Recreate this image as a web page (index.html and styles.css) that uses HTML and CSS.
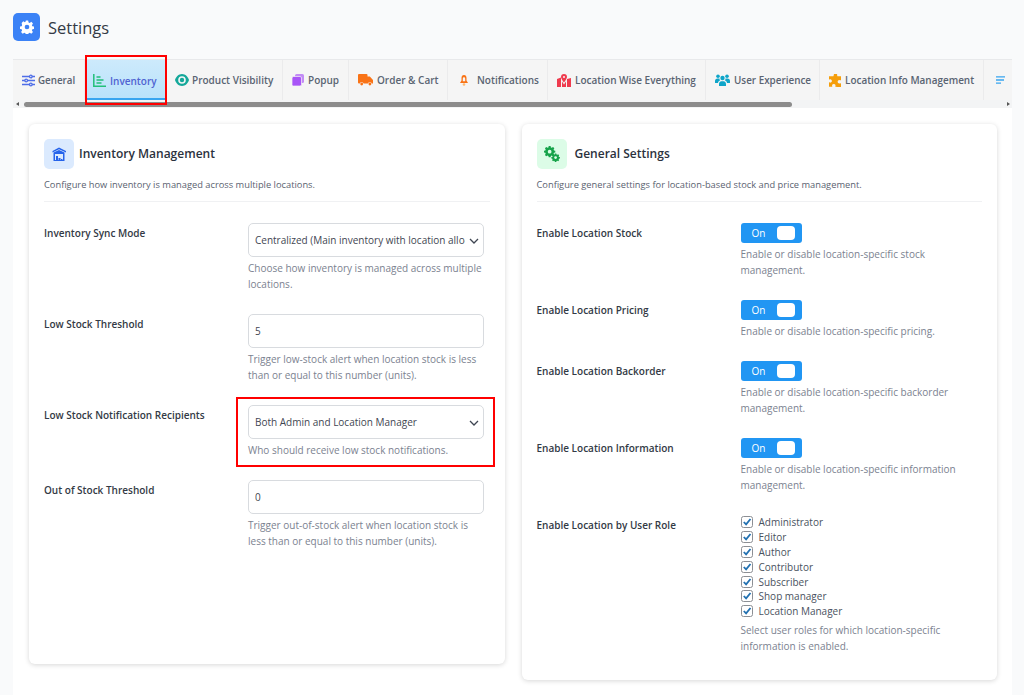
FILE: index.html
```html
<!DOCTYPE html>
<html lang="en">
<head>
<meta charset="utf-8">
<title>Settings</title>
<link rel="stylesheet" href="styles.css">
</head>
<body>
<div class="page">
  <header class="page-head">
    <span class="logo"><svg width="14" height="14" viewBox="0 0 24 24"><path fill="#fff" fill-rule="evenodd" d="M10 1h4l.7 3.2 1.900.8 2.800-1.800 2.800 2.800-1.800 2.800.8 1.900 3.100.7v3.900l-3.100.7-.8 1.900 1.800 2.800-2.800 2.800-2.800-1.800-1.900.8-.7 3.100h-4l-.7-3.100-1.900-.8-2.800 1.800-2.800-2.800 1.800-2.800-.8-1.900-3.100-.7v-3.900l3.100-.7.8-1.900L2.800 5l2.800-2.800 2.800 1.800 1-.8zM12 8a4 4 0 1 0 0 8 4 4 0 0 0 0-8z"/></svg></span>
    <h1 class="page-title">Settings</h1>
  </header>
  <div class="tabs-wrap">
    <nav class="tabs">
      <a class="tab tab-general"><svg class="ico" width="13" height="13" viewBox="0 0 14 13"><g stroke="#4f6ee8" stroke-width="1.400" fill="#f5f5f5"><path d="M0 2.200h14M0 6.500h14M0 10.800h14"/><circle cx="9.500" cy="2.200" r="1.400"/><circle cx="4.500" cy="6.500" r="1.400"/><circle cx="9.500" cy="10.800" r="1.400"/></g></svg>General</a>
      <a class="tab tab-inventory active"><svg class="ico" width="13" height="13" viewBox="0 0 13 13"><path d="M.8 0v12.200H13M3.500 3h4M3.500 6h7M3.500 9h5" stroke="#22c07a" stroke-width="1.500" fill="none"/></svg>Inventory</a>
      <a class="tab tab-visibility"><svg class="ico" width="14" height="12" viewBox="0 0 14 12"><path fill="#14a89a" fill-rule="evenodd" d="M7 0c3.500 0 6 2.800 7 6-1 3.200-3.500 6-7 6S1 9.200 0 6c1-3.200 3.500-6 7-6zm0 2.200a3.800 3.800 0 1 0 0 7.600 3.800 3.800 0 0 0 0-7.600z"/><circle cx="7" cy="6" r="2.200" fill="#14a89a"/></svg>Product Visibility</a>
      <a class="tab tab-popup"><svg class="ico" width="12" height="12" viewBox="0 0 12 12"><rect x="3" y="0" width="9" height="9" rx="1.500" fill="#c28bf5"/><rect x="0" y="2.500" width="9.500" height="9.500" rx="1.500" fill="#a855f7" stroke="#f5f5f5" stroke-width=".7"/></svg>Popup</a>
      <a class="tab tab-order"><svg class="ico" width="15" height="12" viewBox="0 0 15 12"><path fill="#f97316" d="M0 1a1 1 0 0 1 1-1h7.500a1 1 0 0 1 1 1v1.500h2.300L15 6v3.500h-1.200a2 2 0 0 0-3.900 0H5.600a2 2 0 0 0-3.900 0H1a1 1 0 0 1-1-1z"/><circle cx="3.700" cy="10" r="1.400" fill="#f97316"/><circle cx="11.900" cy="10" r="1.400" fill="#f97316"/></svg>Order &amp; Cart</a>
      <a class="tab tab-notify"><svg class="ico ico-bell" width="8" height="11" viewBox="0 0 8 11"><path fill="#f97316" fill-rule="evenodd" d="M4 0c1.600 0 2.500 1.300 2.500 3v2.500L8 8H0l1.500-2.500V3C1.500 1.300 2.400 0 4 0zm0 2.200c-.8 0-1.200.6-1.200 1.500v2.500h2.400V3.700c0-.9-.4-1.500-1.200-1.500z"/><circle cx="4" cy="9.500" r="1.300" fill="#fdba74"/></svg>Notifications</a>
      <a class="tab tab-location"><svg class="ico" width="14" height="13" viewBox="0 0 14 13"><path fill="#ef3b4e" d="M0 5l4-1.500V13L0 13zM10 5l4-1v9h-4zM5 7.500l2 3 2-3V13H5z"/><path fill="#ef3b4e" fill-rule="evenodd" d="M7 0a3 3 0 0 1 3 3c0 1.700-3 5.500-3 5.500S4 4.700 4 3a3 3 0 0 1 3-3zm0 2a1 1 0 1 0 0 2 1 1 0 0 0 0-2z"/></svg>Location Wise Everything</a>
      <a class="tab tab-users"><svg class="ico" width="15" height="12" viewBox="0 0 15 12"><g fill="#0ea5c9"><circle cx="3" cy="2.200" r="1.800"/><circle cx="12" cy="2.200" r="1.800"/><circle cx="7.500" cy="4" r="2.200"/><path d="M0 7c0-1.500 1-2.500 2.500-2.500h2a3 3 0 0 0 .5 2C3.800 7 3 8 3 9H0zM15 7c0-1.500-1-2.500-2.500-2.500h-2a3 3 0 0 1-.5 2c1.200.5 2 1.500 2 2.500h3zM4 10.200C4 8.500 5 7.200 6.500 7.200h2c1.500 0 2.500 1.300 2.500 3V12H4z"/></g></svg>User Experience</a>
      <a class="tab tab-info"><svg class="ico" width="13" height="13" viewBox="0 0 13 13"><path fill="#f59e0b" d="M5 0a1.800 1.800 0 0 1 3.200 1.400c0 .5 0 .8.300.9H12v3.600c-.3.600-1 0-1.600 0a1.800 1.800 0 0 0 0 3.600c.6 0 1.300-.6 1.600 0V13H8.500l-2-.2c-.5-.5.200-1.100 0-1.700a1.800 1.800 0 0 0-3.400 0c-.2.600.5 1.200 0 1.700H0V8.500c.6-.4 1 .3 1.700.1a1.800 1.800 0 0 0 0-3.400C1 5 .6 5.700 0 5.300V2.300h4.300c.5-.4.300-1.500.7-2.300z"/></svg>Location Info Management</a>
      <a class="tab tab-text"><svg class="ico" width="9" height="8" viewBox="0 0 9 8"><path d="M0 .8h9M0 4h8M0 7.200h5" stroke="#38a5f0" stroke-width="1.300"/></svg></a>
    </nav>
    <div class="scrollbar">
      <span class="arrow arrow-left"></span>
      <span class="thumb"></span>
      <span class="arrow arrow-right"></span>
    </div>
  </div>
  <main class="panel">
    <section class="card card-left">
      <div class="card-head">
        <span class="card-icon card-icon-blue"><svg width="14" height="14" viewBox="0 0 14 14"><path fill="#2563eb" fill-rule="evenodd" d="M7 .5 14 4v1.500L7 2.200.5 5.500V4zM1.500 5.500 7 3l5.500 2.500V14h-11zM3 7v6h8V7z"/><path fill="#2563eb" d="M4 9h2v4H4zM6.500 11h2v2h-2zM9 12h1.500v1H9z"/></svg></span>
        <h2 class="card-title">Inventory Management</h2>
      </div>
      <p class="card-desc">Configure how inventory is managed across multiple locations.</p>
      <div class="row">
        <label class="row-label">Inventory Sync Mode</label>
        <div class="row-field">
          <div class="select-wrap">
            <select class="control select"><option>Centralized (Main inventory with location allocation)</option></select>
            <svg class="chevron" width="10" height="6" viewBox="0 0 10 6"><path d="M1 1l4 4 4-4" stroke="#3f4652" stroke-width="1.300" fill="none"/></svg>
          </div>
          <p class="help">Choose how inventory is managed across multiple locations.</p>
        </div>
      </div>
      <div class="row">
        <label class="row-label">Low Stock Threshold</label>
        <div class="row-field">
          <input class="control" type="text" value="5">
          <p class="help">Trigger low-stock alert when location stock is less than or equal to this number (units).</p>
        </div>
      </div>
      <div class="row">
        <label class="row-label">Low Stock Notification Recipients</label>
        <div class="row-field">
          <div class="select-wrap">
            <select class="control select"><option>Both Admin and Location Manager</option></select>
            <svg class="chevron" width="10" height="6" viewBox="0 0 10 6"><path d="M1 1l4 4 4-4" stroke="#3f4652" stroke-width="1.300" fill="none"/></svg>
          </div>
          <p class="help">Who should receive low stock notifications.</p>
        </div>
      </div>
      <div class="row">
        <label class="row-label">Out of Stock Threshold</label>
        <div class="row-field">
          <input class="control" type="text" value="0">
          <p class="help">Trigger out-of-stock alert when location stock is less than or equal to this number (units).</p>
        </div>
      </div>
    </section>
    <section class="card card-right">
      <div class="card-head card-head-wide">
        <span class="card-icon card-icon-green"><svg width="16" height="16" viewBox="0 0 17 17"><g fill="#16a34a" fill-rule="evenodd"><path d="M5 0h2l.3 1.500 1 .4L9.600 1 11 2.400l-.8 1.300.4 1 1.400.3v2l-1.400.3-.4 1 .8 1.300-1.400 1.400-1.300-.8-1 .4L7 12H5l-.3-1.400-1-.4-1.300.8L1 9.600l.8-1.300-.4-1L0 7V5l1.400-.3.4-1L1 2.400 2.400 1l1.300.9 1-.4zM6 4a2 2 0 1 0 0 4 2 2 0 0 0 0-4z"/><path d="M11.500 8h1.600l.2 1 .8.300.9-.5 1.100 1.100-.5.900.3.800 1 .2v1.500l-1 .2-.3.800.5.900-1.100 1-.9-.5-.8.300-.2 1h-1.600l-.2-1-.8-.3-.9.500-1-1 .5-.900-.3-.800-1-.200v-1.500l1-.200.3-.800-.5-.900 1-1.100.9.500.8-.300zM12.300 10.800a1.500 1.500 0 1 0 0 3 1.500 1.500 0 0 0 0-3z"/></g></svg></span>
        <h2 class="card-title">General Settings</h2>
      </div>
      <p class="card-desc">Configure general settings for location-based stock and price management.</p>
      <div class="row">
        <label class="row-label">Enable Location Stock</label>
        <div class="row-field">
          <span class="toggle"><span class="toggle-text">On</span><span class="knob"></span></span>
          <p class="help">Enable or disable location-specific stock management.</p>
        </div>
      </div>
      <div class="row">
        <label class="row-label">Enable Location Pricing</label>
        <div class="row-field">
          <span class="toggle"><span class="toggle-text">On</span><span class="knob"></span></span>
          <p class="help">Enable or disable location-specific pricing.</p>
        </div>
      </div>
      <div class="row">
        <label class="row-label">Enable Location Backorder</label>
        <div class="row-field">
          <span class="toggle"><span class="toggle-text">On</span><span class="knob"></span></span>
          <p class="help">Enable or disable location-specific backorder management.</p>
        </div>
      </div>
      <div class="row">
        <label class="row-label">Enable Location Information</label>
        <div class="row-field">
          <span class="toggle"><span class="toggle-text">On</span><span class="knob"></span></span>
          <p class="help">Enable or disable location-specific information management.</p>
        </div>
      </div>
      <div class="row">
        <label class="row-label">Enable Location by User Role</label>
        <div class="row-field">
          <ul class="checks">
            <li class="check"><svg class="box" width="12" height="12" viewBox="0 0 12 12"><rect x=".5" y=".5" width="11" height="11" rx="2" fill="#fff" stroke="#8c8f94"/><path d="M2.800 6l2.300 2.400L9.500 3" stroke="#2271b1" stroke-width="1.800" fill="none"/></svg>Administrator</li>
            <li class="check"><svg class="box" width="12" height="12" viewBox="0 0 12 12"><rect x=".5" y=".5" width="11" height="11" rx="2" fill="#fff" stroke="#8c8f94"/><path d="M2.800 6l2.300 2.400L9.500 3" stroke="#2271b1" stroke-width="1.800" fill="none"/></svg>Editor</li>
            <li class="check"><svg class="box" width="12" height="12" viewBox="0 0 12 12"><rect x=".5" y=".5" width="11" height="11" rx="2" fill="#fff" stroke="#8c8f94"/><path d="M2.800 6l2.300 2.400L9.500 3" stroke="#2271b1" stroke-width="1.800" fill="none"/></svg>Author</li>
            <li class="check"><svg class="box" width="12" height="12" viewBox="0 0 12 12"><rect x=".5" y=".5" width="11" height="11" rx="2" fill="#fff" stroke="#8c8f94"/><path d="M2.800 6l2.300 2.400L9.500 3" stroke="#2271b1" stroke-width="1.800" fill="none"/></svg>Contributor</li>
            <li class="check"><svg class="box" width="12" height="12" viewBox="0 0 12 12"><rect x=".5" y=".5" width="11" height="11" rx="2" fill="#fff" stroke="#8c8f94"/><path d="M2.800 6l2.300 2.400L9.500 3" stroke="#2271b1" stroke-width="1.800" fill="none"/></svg>Subscriber</li>
            <li class="check"><svg class="box" width="12" height="12" viewBox="0 0 12 12"><rect x=".5" y=".5" width="11" height="11" rx="2" fill="#fff" stroke="#8c8f94"/><path d="M2.800 6l2.300 2.400L9.500 3" stroke="#2271b1" stroke-width="1.800" fill="none"/></svg>Shop manager</li>
            <li class="check"><svg class="box" width="12" height="12" viewBox="0 0 12 12"><rect x=".5" y=".5" width="11" height="11" rx="2" fill="#fff" stroke="#8c8f94"/><path d="M2.800 6l2.300 2.400L9.500 3" stroke="#2271b1" stroke-width="1.800" fill="none"/></svg>Location Manager</li>
          </ul>
          <p class="help">Select user roles for which location-specific information is enabled.</p>
        </div>
      </div>
    </section>
  </main>
  <div class="annot annot-tab"></div>
  <div class="annot annot-field"></div>
</div>
</body>
</html>
```
FILE: styles.css
```css
* { box-sizing: border-box; }
html, body { margin: 0; padding: 0; height: 695px; overflow: hidden; }
body {
  background: #f9fafb;
  font-family: "Open Sans", "Noto Sans", sans-serif;
  color: #3f4652;
}
.page { position: relative; height: 695px; padding: 13px 12px 0 13px; overflow: hidden; }
.page-head { display: flex; align-items: center; gap: 8px; height: 28px; margin-bottom: 18px; }
.logo {
  width: 27px; height: 28px; border-radius: 5px; background: #3b82f6;
  display: flex; align-items: center; justify-content: center;
}
.page-title { margin: 1px 0 0; font-size: 16.500px; line-height: 28px; font-weight: 400; color: #333a45; }

.tabs-wrap { background: #f3f4f5; border-top: 1px solid #e8e9eb; height: 49px; }
.tabs { display: flex; height: 40px; overflow: hidden; background: #f5f5f5; }
.tab {
  flex: none; display: flex; align-items: center; gap: 3px;
  height: 40px; padding: 0 9px;
  border-right: 1px solid #ebebec;
  font-size: 10px; font-weight: 600; color: #5a6472; white-space: nowrap;
}
.ico { flex: none; }
.tab.active {
  padding-top: 3px;
  background: linear-gradient(#cdeafc, #b9e2fb);
  border-bottom: 2px solid #38a5f0;
  color: #4f63d2;
}
.tab-general { width: 72px; font-size: 9.800px; }
.tab-inventory { width: 81px; padding-left: 8px; gap: 4px; }
.tab-visibility { width: 117px; }
.tab-popup { width: 66px; gap: 4px; }
.tab-order { width: 99px; gap: 4px; }
.tab-notify { width: 100px; gap: 9px; padding-left: 12px; }
.tab-location { width: 158px; gap: 4px; }
.tab-users { width: 114px; gap: 4px; font-size: 9.900px; }
.tab-info { width: 164px; font-size: 9.950px; }
.tab-text { width: 60px; padding-left: 12px; }
.scrollbar { display: flex; align-items: center; height: 9px; padding: 0 1px; background: #f3f4f5; border-bottom: 1px solid #e8e9eb; }
.thumb { width: 768px; height: 5px; margin-left: 5px; border-radius: 3px; background: #8c8c8c; }
.arrow { width: 0; height: 0; border-top: 2.500px solid transparent; border-bottom: 2.500px solid transparent; }
.arrow-left { border-right: 3px solid #555; margin-left: 2px; }
.arrow-right { border-left: 3px solid #555; margin-left: auto; margin-right: 1px; }

.panel {
  display: flex; align-items: flex-start; gap: 17px;
  height: 600px; padding: 16px 15px 0 16px; background: #fff;
}
.card {
  width: 476px; padding: 15px 15px 4px; background: #fff;
  border-radius: 6px; box-shadow: 0 1px 5px rgba(0, 0, 0, .16);
}
.card-left { min-height: 540px; }
.card-head { display: flex; align-items: center; gap: 5px; height: 30px; }
.card-head-wide { gap: 8px; }
.card-icon { width: 30px; height: 30px; border-radius: 5px; display: flex; align-items: center; justify-content: center; }
.card-icon-blue { background: #dbeafe; }
.card-icon-green { background: #dcfce7; }
.card-title { margin: 0 0 1px; font-size: 12px; line-height: 28px; font-weight: 600; color: #2b323d; }
.card-desc {
  margin: 8px 0 21px; padding-bottom: 8px; height: 25px;
  border-bottom: 1px solid #f0f1f3;
  font-size: 9.300px; line-height: 16px; color: #5a6270;
}
.row { display: flex; margin-bottom: 22px; }
.row-label { flex: none; width: 204px; font-size: 10px; line-height: 20px; font-weight: 600; color: #333a45; }
.row-field { flex: none; width: 236px; }
.control {
  display: block; width: 236px; height: 34px; padding: 0 6px;
  border: 1px solid #d8dbdf; border-radius: 5px; background: #fff;
  font-family: inherit; font-size: 10px; color: #3f4652; outline: none;
}
.select { appearance: none; -webkit-appearance: none; padding-right: 18px; text-overflow: clip; }
.select-wrap { position: relative; }
.chevron { position: absolute; right: 5px; top: 15px; }
.help { margin: 3px 0 0; font-size: 10px; line-height: 16px; color: #7b8290; }
.toggle {
  display: flex; align-items: center; justify-content: space-between;
  width: 61px; height: 20px; padding: 0 7px 0 11px; border-radius: 3px; background: #2196f3;
}
.toggle-text { margin-bottom: 1px; font-size: 10px; line-height: 16px; color: #fff; }
.knob { width: 18px; height: 14px; border-radius: 4px; background: #fff; }
.checks { list-style: none; margin: 0; padding: 0; }
.check { display: flex; align-items: center; gap: 6px; height: 14.800px; font-size: 10px; color: #4a5260; }
.box { flex: none; }

.annot { position: absolute; border: 2px solid #f00; pointer-events: none; }
.annot-tab { left: 85px; top: 55px; width: 82px; height: 50px; }
.annot-field { left: 236px; top: 397px; width: 259px; height: 70px; }
```
